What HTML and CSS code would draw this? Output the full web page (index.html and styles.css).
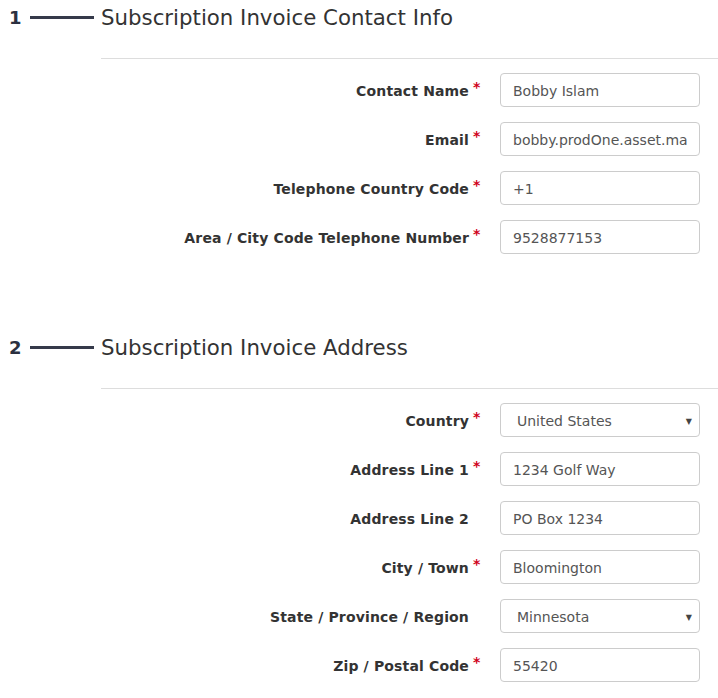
FILE: index.html
```html
<!DOCTYPE html>
<html lang="en">

<head>
  <meta charset="UTF-8" />
  <title>Subscription Invoice</title>
  <link rel="stylesheet" href="styles.css">
</head>

<body>
  <!-- Step 1 -->
  <section class="step">
    <div class="step-head">
      <span class="step-num">1</span>
      <span class="step-line"></span>
      <h2>Subscription Invoice Contact Info</h2>
    </div>
    <div class="step-body">
      <div class="row">
        <label>Contact Name</label><span class="req">*</span>
        <input class="field" type="text" value="Bobby Islam">
      </div>
      <div class="row">
        <label>Email</label><span class="req">*</span>
        <input class="field" type="text" value="bobby.prodOne.asset.manager@example.com">
      </div>
      <div class="row">
        <label>Telephone Country Code</label><span class="req">*</span>
        <input class="field" type="text" value="+1">
      </div>
      <div class="row">
        <label>Area / City Code Telephone Number</label><span class="req">*</span>
        <input class="field" type="text" value="9528877153">
      </div>
    </div>
  </section>

  <!-- Step 2 -->
  <section class="step second">
    <div class="step-head">
      <span class="step-num">2</span>
      <span class="step-line"></span>
      <h2>Subscription Invoice Address</h2>
    </div>
    <div class="step-body">
      <div class="row">
        <label>Country</label><span class="req">*</span>
        <div class="field select"><span>United States</span><span class="caret">&#9660;</span></div>
      </div>
      <div class="row">
        <label>Address Line 1</label><span class="req">*</span>
        <input class="field" type="text" value="1234 Golf Way">
      </div>
      <div class="row">
        <label>Address Line 2</label><span class="req"></span>
        <input class="field" type="text" value="PO Box 1234">
      </div>
      <div class="row">
        <label>City / Town</label><span class="req">*</span>
        <input class="field" type="text" value="Bloomington">
      </div>
      <div class="row">
        <label>State / Province / Region</label><span class="req"></span>
        <div class="field select"><span>Minnesota</span><span class="caret">&#9660;</span></div>
      </div>
      <div class="row">
        <label>Zip / Postal Code</label><span class="req">*</span>
        <input class="field" type="text" value="55420">
      </div>
    </div>
  </section>
</body>

</html>
```

FILE: styles.css
```css
/* Base */
body {
  margin: 0;
  font-family: Verdana, "DejaVu Sans", sans-serif;
  color: #333;
  background: #fff;
}

/* Step heading */
.step-head {
  display: flex;
  align-items: center;
  height: 34px;
  padding-left: 9px;
}

.step-num {
  font-size: 18px;
  font-weight: bold;
  color: #2b3040;
  width: 14px;
}

.step-line {
  width: 64px;
  height: 3px;
  background: #353a4a;
  margin: 0 7px 0 7px;
}

.step-head h2 {
  margin: 0;
  font-size: 21.3px;
  font-weight: normal;
  color: #333;
}

.second {
  margin-top: 76px;
}

/* Form body */
.step-body {
  margin-left: 101px;
  margin-top: 24px;
  border-top: 1px solid #ddd;
  padding-top: 14px;
  padding-right: 18px;
}

.row {
  display: flex;
  align-items: center;
  height: 34px;
  margin-bottom: 15px;
}

.row label {
  flex: 1;
  text-align: right;
  font-size: 14px;
  font-weight: bold;
  letter-spacing: 0.15px;
  color: #333;
  padding-top: 1px;
}

.req {
  width: 12px;
  margin-left: 4px;
  margin-right: 15px;
  color: #d0021b;
  font-weight: bold;
  font-size: 14px;
  align-self: flex-start;
  margin-top: 6px;
}

.field {
  box-sizing: border-box;
  width: 200px;
  height: 34px;
  padding: 2px 12px 0;
  border: 1px solid #ccc;
  border-radius: 4px;
  font-family: inherit;
  font-size: 14px;
  color: #555;
  background: #fff;
}

.select {
  display: flex;
  align-items: center;
  justify-content: space-between;
  padding-left: 16px;
  padding-right: 7px;
}

.caret {
  font-size: 8px;
  color: #444;
}
```
